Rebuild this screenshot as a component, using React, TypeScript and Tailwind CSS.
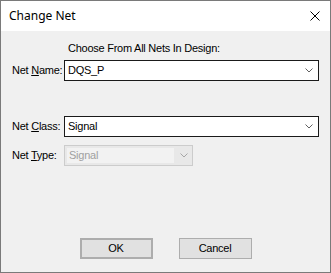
import React from "react";

function Chevron({ color }: { color: string }) {
  return (
    <svg width="8" height="5" viewBox="0 0 8 5" className="block">
      <polyline points="0.5,0.5 4,4 7.5,0.5" fill="none" stroke={color} strokeWidth="1" />
    </svg>
  );
}

export default function App() {
  const font = { fontFamily: '"Liberation Sans", Arial, sans-serif' };
  return (
    <div className="w-[331px] h-[273px] border border-[#7a7a7a] bg-[#f0f0f0] flex flex-col overflow-hidden">
      <div className="h-[30px] bg-white flex items-center justify-between pl-[8px] pr-[10px]">
        <span className="text-[12px] text-black leading-none" style={{ fontFamily: '"Noto Sans", sans-serif' }}>
          Change Net
        </span>
        <svg width="10" height="10" viewBox="0 0 10 10" className="block">
          <path d="M0.5,0.5 L9.5,9.5 M9.5,0.5 L0.5,9.5" stroke="#000" strokeWidth="1" fill="none" />
        </svg>
      </div>
      <div className="flex-1 flex flex-col text-[11px] leading-[13px] text-black tracking-[-0.25px]" style={font}>
        <div className="mt-[11px] pl-[67px]">Choose From All Nets In Design:</div>
        <div className="mt-[5px] flex items-center pl-[11px]">
          <span className="w-[52px]">
            Net <span className="underline underline-offset-[1px]">N</span>ame:
          </span>
          <div className="w-[255px] h-[21px] border border-[#1a1a1a] bg-white flex items-center justify-between pl-[3px] pr-[5px]">
            <span>DQS_P</span>
            <Chevron color="#606060" />
          </div>
        </div>
        <div className="mt-[35px] flex items-center pl-[11px]">
          <span className="w-[52px]">
            Net <span className="underline underline-offset-[1px]">C</span>lass:
          </span>
          <div className="w-[255px] h-[21px] border border-[#1a1a1a] bg-white flex items-center justify-between pl-[3px] pr-[5px]">
            <span>Signal</span>
            <Chevron color="#606060" />
          </div>
        </div>
        <div className="mt-[8px] flex items-center pl-[11px]">
          <span className="w-[52px]">
            Net <span className="underline underline-offset-[1px]">T</span>ype:
          </span>
          <div className="w-[129px] h-[21px] border border-[#cccccc] bg-[#e8e8e8] flex items-center justify-between pl-[2px] pr-[4px]">
            <div className="w-[107px] h-[15px] bg-[#f2f2f2] flex items-center pl-[2px] text-[#a0a0a0]">Signal</div>
            <Chevron color="#a6a6a6" />
          </div>
        </div>
        <div className="mt-[72px] flex justify-center gap-[26px]">
          <div className="w-[73px] h-[21px] border-2 border-[#adadad] bg-[#e1e1e1] flex items-center justify-center">
            OK
          </div>
          <div className="w-[73px] h-[21px] border border-[#adadad] bg-[#e1e1e1] flex items-center justify-center">
            Cancel
          </div>
        </div>
      </div>
    </div>
  );
}
